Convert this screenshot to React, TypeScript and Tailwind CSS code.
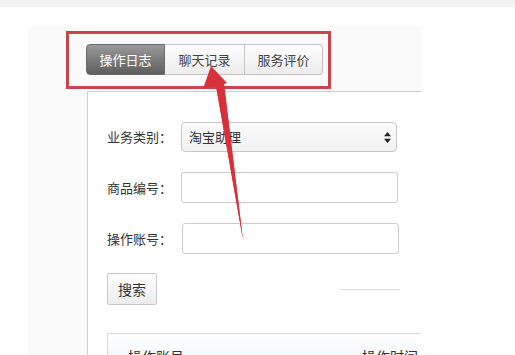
import React from "react";

const font = { fontFamily: '"Noto Sans CJK SC", "Noto Sans", sans-serif' };

export default function App() {
  return (
    <div className="relative w-[515px] h-[355px] overflow-hidden bg-white" style={font}>
      <div className="h-[7px] bg-[#f3f3f3]" />
      <div className="ml-[28px] mt-[19px] w-[393px] h-[400px] bg-[#fafafa] flex flex-col">
        <div className="h-[65px] pl-[58px] pt-[18px]">
          <div className="flex h-[31px] text-[13px]">
            <div className="w-[79px] flex items-center justify-center rounded-l-[4px] border border-[#6a6a6a] bg-gradient-to-b from-[#9a9a9a] to-[#5e5e5e] text-white">
              操作日志
            </div>
            <div className="w-[80px] flex items-center justify-center border-y border-r border-[#c4c4c4] bg-gradient-to-b from-[#fefefe] to-[#ececec] text-[#444]">
              聊天记录
            </div>
            <div className="w-[78px] flex items-center justify-center rounded-r-[4px] border-y border-r border-[#c4c4c4] bg-gradient-to-b from-[#fefefe] to-[#ececec] text-[#444]">
              服务评价
            </div>
          </div>
        </div>
        <div className="flex flex-1">
          <div className="w-[59px]" />
          <div className="flex-1 bg-white border-l border-t border-[#cfcfcf] pl-[19px] pt-[30px] text-[13px] text-[#333]">
            <div className="flex items-center h-[30px]">
              <div className="w-[74px]">业务类别：</div>
              <div className="w-[216px] h-[30px] rounded-[4px] border border-[#c8c8c8] bg-gradient-to-b from-[#fbfbfb] to-[#f1f1f1] flex items-center pl-[7px] pr-[5px] justify-between">
                <span>淘宝助理</span>
                <svg width="7" height="11" viewBox="0 0 7 11">
                  <path d="M3.5 0 L7 4.3 L0 4.3 Z M3.5 11 L7 6.7 L0 6.7 Z" fill="#222" />
                </svg>
              </div>
            </div>
            <div className="flex items-center h-[31px] mt-[20px]">
              <div className="w-[74px]">商品编号：</div>
              <div className="w-[217px] h-[31px] rounded-[3px] border border-[#cccccc] bg-white" />
            </div>
            <div className="flex items-center h-[31px] mt-[20px]">
              <div className="w-[75px]">操作账号：</div>
              <div className="w-[217px] h-[31px] rounded-[3px] border border-[#cccccc] bg-white" />
            </div>
            <div className="flex items-center mt-[19px]">
              <div className="w-[50px] h-[32px] rounded-[2px] border border-[#c8c8c8] bg-gradient-to-b from-[#ffffff] to-[#ececec] flex items-center justify-center text-[14px]">
                搜索
              </div>
              <div className="ml-[183px] w-[60px] h-px bg-[#dcdcdc]" />
            </div>
            <div className="mt-[28px] border-l border-t border-[#dcdcdc] h-[40px] bg-gradient-to-b from-[#ffffff] to-[#eef3f7] flex pt-[12px] text-[14px]">
              <div className="pl-[20px] w-[254px]">操作账号</div>
              <div>操作时间</div>
            </div>
          </div>
        </div>
      </div>
      <div className="absolute left-[66px] top-[31px] w-[265px] h-[58px] border-[3px] border-[#c9454d]" />
      <svg className="absolute left-0 top-0" width="515" height="355" viewBox="0 0 515 355">
        <polygon points="211,66 203,89 213,86 216,86 243,240 224,84 227,83" fill="#d8313b" />
        <polygon points="216,86 224,84 243,240" fill="#d8313b" />
      </svg>
    </div>
  );
}
